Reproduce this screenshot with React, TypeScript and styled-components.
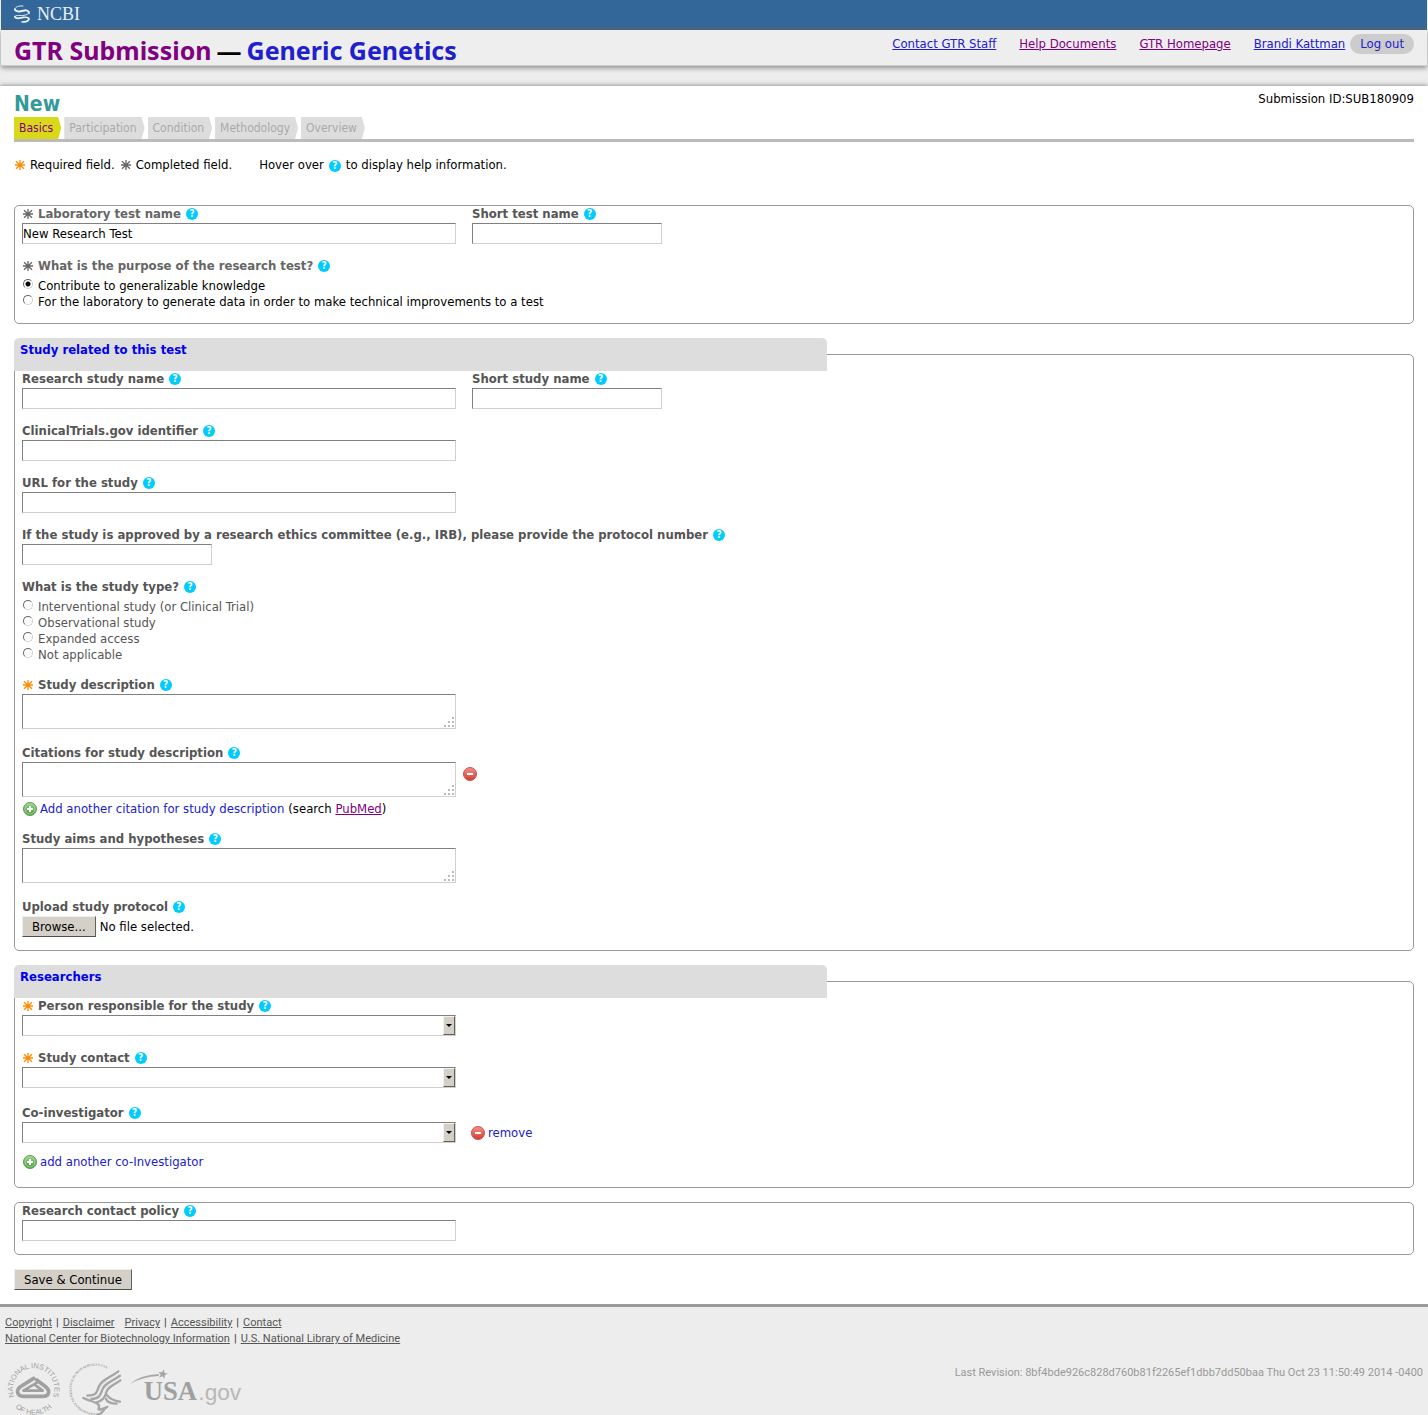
import React, { useId, useRef, useState } from "react";
import styled, { createGlobalStyle } from "styled-components";

const GlobalStyle = createGlobalStyle`
  *, *::before, *::after { box-sizing: border-box; }
  body {
    margin: 0;
    background: #ededed;
    color: #000;
    font: 13px/16px "DejaVu Sans Condensed", "DejaVu Sans", sans-serif;
  }
  button, input, textarea, select { font: inherit; color: inherit; }
`;

/* ---------- page frame ---------- */

const Page = styled.div`
  min-height: 100vh;
  display: flex;
  flex-direction: column;
`;

const BrandBar = styled.div`
  height: 30px;
  margin: 0 1px;
  padding: 0 13px;
  display: flex;
  align-items: center;
  background: #336699;
  border-bottom: 3px solid #4a6785;
`;

const BrandLink = styled.a`
  display: flex;
  align-items: center;
  gap: 7px;
  color: #e8eef5;
  font: 18px/20px "Liberation Serif", serif;
  text-decoration: none;
`;

const SiteHeader = styled.header`
  margin: 0 1px 20px;
  height: 36px;
  padding: 0 13px;
  display: flex;
  justify-content: space-between;
  background: #eee;
  border-bottom: 1px solid #ccc;
  box-shadow: 0 2px 5px rgba(0, 0, 0, 0.4);
`;

const SiteTitle = styled.h1`
  margin: 0;
  display: flex;
  gap: 5px;
  font: bold 25px/40px "Noto Sans", sans-serif;
  white-space: nowrap;
`;

const TitleLink = styled.a<{ $visited?: boolean }>`
  color: ${(p) => (p.$visited ? "#800080" : "#2020cc")};
  text-decoration: none;
`;

const HeaderNav = styled.nav`
  padding-top: 4px;
  display: flex;
  align-items: flex-start;
  gap: 23px;
  line-height: 20px;
`;

const Account = styled.div`
  display: flex;
  gap: 5px;
`;

const TextLink = styled.a<{ $visited?: boolean }>`
  color: ${(p) => (p.$visited ? "#800080" : "#2020cc")};
  text-decoration-thickness: 1px;
  text-underline-offset: 1px;
`;

const LogOut = styled.button`
  height: 20px;
  padding: 0 10px;
  border: 0;
  border-radius: 10px;
  background: #ccc;
  color: #2020cc;
`;

const Main = styled.main`
  flex: 1;
  padding: 6px 14px 14px;
  background: #fff;
  box-shadow: 0 0 5px rgba(0, 0, 0, 0.5);
`;

const Heading = styled.div`
  display: flex;
  justify-content: space-between;
  align-items: flex-start;
  height: 25px;
  line-height: 14px;
`;

const PageTitle = styled.h2`
  margin: 0;
  color: #339999;
  font-size: 21px;
  line-height: 24px;
`;

/* ---------- step tabs ---------- */

const Steps = styled.nav`
  display: flex;
  gap: 3px;
  border-bottom: 3px solid #bbb;
`;

const Step = styled.a<{ $current?: boolean }>`
  height: 22px;
  padding: 0 8px 0 5px;
  color: ${(p) => (p.$current ? "#800080" : "#aaa")};
  background: ${(p) => (p.$current ? "#d9d91a" : "#ddd")};
  font-size: 12px;
  line-height: 22px;
  text-decoration: none;
  clip-path: polygon(0 0, calc(100% - 3px) 0, 100% 50%, calc(100% - 3px) 100%, 0 100%);
`;

const Hints = styled.div`
  margin: 14px 0 31px;
  display: flex;
  align-items: center;
  gap: 27px;
  line-height: 18px;
`;

const HintGroup = styled.span`
  display: flex;
  align-items: center;
  gap: 5px;
`;

/* ---------- form ---------- */

const Form = styled.form`
  display: flex;
  flex-direction: column;
  align-items: stretch;
  gap: 14px;
`;

const Panel = styled.fieldset`
  margin: 0;
  padding: 0 7px;
  min-width: 0;
  border: 1px solid #999;
  border-radius: 5px;
`;

const PanelTitle = styled.legend`
  width: calc(60% - 17px);
  height: 33px;
  margin-left: -8px;
  padding: 0 6px;
  border-radius: 5px 5px 0 0;
  background: #ddd;
  color: #0000ee;
  font-weight: bold;
  line-height: 24px;
`;

const Columns = styled.div`
  display: flex;
  gap: 16px;
`;

const FieldBox = styled.div<{ $width?: number; $after?: number }>`
  width: ${(p) => (p.$width ? `${p.$width}px` : "auto")};
  margin-bottom: ${(p) => p.$after ?? 14}px;
`;

const Caption = styled.div<{ $done?: boolean }>`
  display: flex;
  align-items: center;
  gap: 5px;
  height: 17px;
  padding-bottom: 2px;
  color: ${(p) => (p.$done ? "#666" : "#555")};
  font-weight: bold;
  line-height: 15px;
  white-space: nowrap;
`;

const HelpButton = styled.button`
  flex: none;
  width: 12px;
  height: 12px;
  margin-top: 1px;
  padding: 0;
  border: 0;
  border-radius: 50%;
  background: #00ccff;
  color: #fff;
  font-size: 10px;
  font-weight: bold;
  line-height: 12px;
  text-align: center;
`;

const sunken = `
  border: 1px solid;
  border-color: #808080 #d4d0c8 #d4d0c8 #808080;
  border-radius: 0;
  background: #fff;
`;

const TextInput = styled.input`
  display: block;
  width: 100%;
  height: 21px;
  padding: 0 0 1px;
  color: #000;
  ${sunken}
`;

const AreaWrap = styled.div`
  position: relative;
  display: flex;
`;

const Area = styled.textarea`
  display: block;
  width: 100%;
  height: 35px;
  padding: 1px;
  resize: none;
  ${sunken}
`;

const Grip = styled.svg`
  position: absolute;
  right: 2px;
  bottom: 2px;
  pointer-events: none;
`;

const SelectWrap = styled.div`
  position: relative;
`;

const Select = styled.select`
  display: block;
  width: 100%;
  height: 21px;
  padding: 0 14px 0 2px;
  appearance: none;
  ${sunken}
`;

const SelectArrow = styled.span`
  position: absolute;
  top: 1px;
  right: 1px;
  bottom: 1px;
  width: 12px;
  display: grid;
  place-items: center;
  border: 1px solid;
  border-color: #f4f2ee #606060 #606060 #f4f2ee;
  background: #d4d0c8;
  pointer-events: none;
`;

const Options = styled.div`
  padding-top: 3px;
`;

const Option = styled.label<{ $muted?: boolean }>`
  display: flex;
  gap: 5px;
  height: 16px;
  padding-left: 1px;
  color: ${(p) => (p.$muted ? "#555" : "#000")};
`;

const Radio = styled.input`
  appearance: none;
  width: 10px;
  height: 10px;
  margin: 1px 0 0;
  border: 1px solid;
  border-color: #666 #d4d0c8 #d4d0c8 #666;
  border-radius: 50%;
  background: #fff;
  &:checked {
    background: radial-gradient(circle, #000 0 2px, #fff 3px);
  }
`;

const Row = styled.div<{ $gap?: number; $before?: number; $top?: boolean }>`
  display: flex;
  align-items: ${(p) => (p.$top ? "flex-start" : "center")};
  gap: ${(p) => p.$gap ?? 4}px;
  margin-top: ${(p) => p.$before ?? 0}px;
`;

const Sized = styled.div`
  width: 434px;
`;

const ActionButton = styled.button`
  display: flex;
  align-items: center;
  gap: 3px;
  height: 17px;
  padding: 0 0 0 1px;
  border: 0;
  background: none;
  color: #2020cc;
  line-height: 17px;
`;

const RemoveIconButton = styled.button`
  width: 14px;
  height: 14px;
  margin-top: 5px;
  padding: 0;
  border: 0;
  background: none;
  line-height: 0;
`;

const PushButton = styled.button`
  height: 21px;
  padding: 0 9px;
  align-self: flex-start;
  border: 1px solid;
  border-color: #f0eee8 #606060 #505050 #f0eee8;
  background: #d4d0c8;
  color: #000;
  line-height: 18px;
`;

const HiddenFile = styled.input`
  display: none;
`;

/* ---------- footer ---------- */

const Footer = styled.footer`
  padding: 8px 5px 0;
  border-top: 3px solid #999;
  background: #ededed;
  color: #333;
  font-family: Roboto, sans-serif;
  font-size: 11px;
  position: relative;
`;

const FooterLinks = styled.div`
  display: flex;
  gap: 4px;
`;

const FooterLink = styled.a<{ $spaced?: boolean }>`
  margin-left: ${(p) => (p.$spaced ? 6 : 0)}px;
  color: #555;
`;

const FooterBottom = styled.div`
  margin-top: 12px;
  display: flex;
  justify-content: space-between;
  align-items: flex-start;
`;

const Logos = styled.div`
  display: flex;
  align-items: flex-start;
  gap: 4px;
`;

const LogoLink = styled.a<{ $down?: boolean }>`
  display: block;
  padding-top: ${(p) => (p.$down ? 9 : 0)}px;
  line-height: 0;
`;

const Revision = styled.p`
  margin: 6px 0 0;
  color: #999;
`;

/* ---------- drawings ---------- */

const HelixMark = () => (
  <svg width="16" height="18" viewBox="0 0 48 54" fill="none" stroke="#e8f0f8" strokeLinecap="round" aria-hidden="true">
    <path d="M2 13C6 23 20 19 28 17S44 16 45 24" strokeWidth="6" />
    <path d="M2 13C4 5 14 2 27 3" strokeWidth="3" />
    <path d="M2 35C6 28 20 33 30 31C40 29 46 26 45 20" strokeWidth="3" />
    <path d="M2 35C7 45 18 38 28 37S44 37 45 42C44 48 35 51 24 51" strokeWidth="5" />
  </svg>
);

const Star = ({ done }: { done?: boolean }) => (
  <svg width="11" height="10" viewBox="0 0 11 10" stroke={done ? "#666" : "#ff8c00"} strokeWidth="1.3" aria-hidden="true">
    <path d="M6 0V10M1 5H11M2 1.2L10 8.800M10 1.2L2 8.800" />
  </svg>
);

const Badge = ({ kind }: { kind: "add" | "remove" }) => {
  const id = useId();
  const add = kind === "add";
  return (
    <svg width="14" height="14" viewBox="0 0 14 14" aria-hidden="true">
      <defs>
        <linearGradient id={id} x2="0" y2="1">
          <stop offset="0" stopColor={add ? "#9bcf8d" : "#f2938c"} />
          <stop offset="1" stopColor={add ? "#3f9a35" : "#d63a30"} />
        </linearGradient>
      </defs>
      <circle cx="7" cy="7" r="6.5" fill={`url(#${id})`} stroke={add ? "#5a9e50" : "#c9514a"} />
      {add && <circle cx="7" cy="7" r="5" fill="none" stroke="#b9dfb0" strokeWidth="0.8" />}
      <path d={add ? "M7 4V10M4 7H10" : "M4 7H10"} stroke="#fff" strokeWidth="2" />
    </svg>
  );
};

const GripDots = () => (
  <Grip width="10" height="10" viewBox="0 0 10 10" fill="#bbb" aria-hidden="true">
    <path d="M8 0h2v2H8zM4 4h2v2H4zM8 4h2v2H8zM0 8h2v2H0zM4 8h2v2H4zM8 8h2v2H8z" />
  </Grip>
);

const NihLogo = () => (
  <svg width="57" height="58" viewBox="15 20 171 174" fill="#a0a0a0" role="img" aria-label="National Institutes of Health">
    <defs>
      <path id="nihTop" d="M55 151A62 62 0 1 1 147 151" />
      <path id="nihBottom" d="M25 130A79 79 0 0 0 177 130" />
    </defs>
    <g fontFamily="Liberation Sans, sans-serif" fontSize="22">
      <text><textPath href="#nihTop" startOffset="50%" textAnchor="middle">NATIONAL INSTITUTES</textPath></text>
      <text><textPath href="#nihBottom" startOffset="50%" textAnchor="middle">OF HEALTH</textPath></text>
    </g>
    <g fill="none" stroke="#a0a0a0" strokeLinejoin="round" strokeLinecap="round">
      <path d="M101 78L60 104Q46 116 58 129Q62 132 70 132H130Q146 131 146 118Q145 109 135 102L110 83" strokeWidth="11" />
      <path d="M112 90L70 115H128L104 97" strokeWidth="8" />
    </g>
  </svg>
);

const HhsLogo = () => (
  <svg width="58" height="58" viewBox="198 20 174 174" role="img" aria-label="Department of Health and Human Services">
    <defs>
      <path id="hhsRing" d="M285 182A71 71 0 1 1 352 86" />
    </defs>
    <text fontFamily="Liberation Serif, serif" fontWeight="bold" fontSize="10" fill="#999">
      <textPath href="#hhsRing">DEPARTMENT OF HEALTH &amp; HUMAN SERVICES·USA</textPath>
    </text>
    <g fill="none" stroke="#a6a6a6" strokeWidth="7" strokeLinecap="round" strokeLinejoin="round">
      <path d="M355 57C330 76 304 82 296 104S288 128 262 130" />
      <path d="M360 70C334 88 313 94 307 112S298 138 274 140" />
      <path d="M361 84C338 100 323 104 319 120S306 147 290 150" />
      <path d="M250 137C268 146 276 145 292 154S282 176 306 170L322 164" />
      <path d="M320 128C330 140 344 146 360 148" />
      <path d="M318 140C322 150 334 154 350 154" />
      <path d="M290 187C306 188 306 176 318 166" />
    </g>
  </svg>
);

const UsaGovLogo = () => (
  <svg width="115" height="38" viewBox="383 52 345 114" role="img" aria-label="USA.gov">
    <path d="M388 101Q420 72 476 70L475 76Q424 78 388 101Z" fill="#a6a6a6" />
    <path d="M491 56L492 66L502 69L493 74L493 84L486 77L476 81L481 72L475 64L485 65Z" fill="#a6a6a6" />
    <text x="430" y="147" fontFamily="Liberation Serif, serif" fontWeight="bold" fontSize="80" fill="#a0a0a0">USA</text>
    <text x="594" y="147" fontFamily="Liberation Sans, sans-serif" fontSize="68" fill="#b8b8b8">.gov</text>
  </svg>
);

/* ---------- form parts ---------- */

const Help = ({ about }: { about: string }) => (
  <HelpButton type="button" aria-label={`Help: ${about}`} title={about}>?</HelpButton>
);

type Mark = "required" | "done";

interface LabelProps {
  text: string;
  mark?: Mark;
  htmlFor?: string;
  id?: string;
}

const FieldLabel = ({ text, mark, htmlFor, id }: LabelProps) => (
  <Caption $done={mark === "done"}>
    {mark && <Star done={mark === "done"} />}
    {htmlFor ? <label htmlFor={htmlFor}>{text}</label> : <span id={id}>{text}</span>}
    <Help about={text} />
  </Caption>
);

interface FieldProps {
  label: string;
  mark?: Mark;
  width?: number;
  after?: number;
  value?: string;
}

interface ExtraProps {
  aside?: React.ReactNode;
  children?: React.ReactNode;
}

const TextField = ({ label, mark, width = 434, after, value }: FieldProps) => {
  const id = useId();
  return (
    <FieldBox $width={width} $after={after}>
      <FieldLabel text={label} mark={mark} htmlFor={id} />
      <TextInput id={id} type="text" defaultValue={value} />
    </FieldBox>
  );
};

const AreaField = ({ label, mark, after = 16, aside, children }: FieldProps & ExtraProps) => {
  const id = useId();
  return (
    <FieldBox $after={after}>
      <FieldLabel text={label} mark={mark} htmlFor={id} />
      <Row $gap={7} $top>
        <Sized>
          <AreaWrap>
            <Area id={id} />
            <GripDots />
          </AreaWrap>
        </Sized>
        {aside}
      </Row>
      {children}
    </FieldBox>
  );
};

const SelectField = ({ label, mark, after, aside, children }: FieldProps & ExtraProps) => {
  const id = useId();
  return (
    <FieldBox $after={after}>
      <FieldLabel text={label} mark={mark} htmlFor={id} />
      <Row $gap={14}>
        <Sized>
          <SelectWrap>
            <Select id={id}><option /></Select>
            <SelectArrow>
              <svg width="6" height="3" viewBox="0 0 6 3" aria-hidden="true"><path d="M0 0H6L3 3Z" /></svg>
            </SelectArrow>
          </SelectWrap>
        </Sized>
        {aside}
      </Row>
      {children}
    </FieldBox>
  );
};

interface RadioFieldProps extends FieldProps {
  options: string[];
  muted?: boolean;
}

const RadioField = ({ label, mark, options, value, muted, after }: RadioFieldProps) => {
  const id = useId();
  return (
    <FieldBox role="radiogroup" aria-labelledby={id} $after={after}>
      <FieldLabel text={label} mark={mark} id={id} />
      <Options>
        {options.map((o) => (
          <Option key={o} $muted={muted}>
            <Radio type="radio" name={id + "choice"} defaultChecked={o === value} />
            {o}
          </Option>
        ))}
      </Options>
    </FieldBox>
  );
};

const FileField = () => {
  const id = useId();
  const file = useRef<HTMLInputElement>(null);
  const [name, setName] = useState("No file selected.");
  return (
    <FieldBox $after={13}>
      <FieldLabel text="Upload study protocol" htmlFor={id} />
      <Row>
        <HiddenFile ref={file} id={id} type="file" onChange={(e) => setName(e.target.files?.[0]?.name ?? "No file selected.")} />
        <PushButton type="button" onClick={() => file.current?.click()}>Browse...</PushButton>
        <span>{name}</span>
      </Row>
    </FieldBox>
  );
};

const steps = ["Basics", "Participation", "Condition", "Methodology", "Overview"];

export default function App() {
  return (
    <Page>
      <GlobalStyle />
      <BrandBar>
        <BrandLink href="#ncbi"><HelixMark />NCBI</BrandLink>
      </BrandBar>
      <SiteHeader>
        <SiteTitle>
          <TitleLink href="#gtr" $visited>GTR Submission</TitleLink>
          <span>—</span>
          <TitleLink href="#lab">Generic Genetics</TitleLink>
        </SiteTitle>
        <HeaderNav>
          <TextLink href="#contact">Contact GTR Staff</TextLink>
          <TextLink href="#help" $visited>Help Documents</TextLink>
          <TextLink href="#home" $visited>GTR Homepage</TextLink>
          <Account>
            <TextLink href="#user">Brandi Kattman</TextLink>
            <LogOut type="button">Log out</LogOut>
          </Account>
        </HeaderNav>
      </SiteHeader>

      <Main>
        <Heading>
          <PageTitle>New</PageTitle>
          <span>Submission ID:SUB180909</span>
        </Heading>
        <Steps>
          {steps.map((s, i) => (
            <Step key={s} href={`#${s}`} $current={i === 0}>{s}</Step>
          ))}
        </Steps>
        <Hints>
          <HintGroup>
            <Star /> <span>Required field.</span>
            <Star done /> <span>Completed field.</span>
          </HintGroup>
          <HintGroup>Hover over <Help about="Help information" /> to display help information.</HintGroup>
        </Hints>

        <Form onSubmit={(e) => e.preventDefault()}>
          <Panel>
            <Columns>
              <TextField label="Laboratory test name" mark="done" value="New Research Test" />
              <TextField label="Short test name" width={190} />
            </Columns>
            <RadioField
              label="What is the purpose of the research test?"
              mark="done"
              after={13}
              value="Contribute to generalizable knowledge"
              options={[
                "Contribute to generalizable knowledge",
                "For the laboratory to generate data in order to make technical improvements to a test",
              ]}
            />
          </Panel>

          <Panel>
            <PanelTitle>Study related to this test</PanelTitle>
            <Columns>
              <TextField label="Research study name" />
              <TextField label="Short study name" width={190} />
            </Columns>
            <TextField label="ClinicalTrials.gov identifier" />
            <TextField label="URL for the study" />
            <TextField
              label="If the study is approved by a research ethics committee (e.g., IRB), please provide the protocol number"
              width={190}
            />
            <RadioField
              label="What is the study type?"
              muted
              options={["Interventional study (or Clinical Trial)", "Observational study", "Expanded access", "Not applicable"]}
            />
            <AreaField label="Study description" mark="required" />
            <AreaField
              label="Citations for study description"
              after={14}
              aside={<RemoveIconButton type="button" aria-label="Remove citation"><Badge kind="remove" /></RemoveIconButton>}
            >
              <Row $before={3}>
                <ActionButton type="button"><Badge kind="add" />Add another citation for study description</ActionButton>
                <span>(search <TextLink href="#pubmed" $visited>PubMed</TextLink>)</span>
              </Row>
            </AreaField>
            <AreaField label="Study aims and hypotheses" />
            <FileField />
          </Panel>

          <Panel>
            <PanelTitle>Researchers</PanelTitle>
            <SelectField label="Person responsible for the study" mark="required" />
            <SelectField label="Study contact" mark="required" after={17} />
            <SelectField
              label="Co-investigator"
              after={17}
              aside={<ActionButton type="button"><Badge kind="remove" />remove</ActionButton>}
            >
              <Row $before={10}>
                <ActionButton type="button"><Badge kind="add" />add another co-Investigator</ActionButton>
              </Row>
            </SelectField>
          </Panel>

          <Panel>
            <TextField label="Research contact policy" after={13} />
          </Panel>

          <PushButton type="submit">Save &amp; Continue</PushButton>
        </Form>
      </Main>

      <Footer>
        <FooterLinks>
          <FooterLink href="#copyright">Copyright</FooterLink>|
          <FooterLink href="#disclaimer">Disclaimer</FooterLink>
          <FooterLink href="#privacy" $spaced>Privacy</FooterLink>|
          <FooterLink href="#accessibility">Accessibility</FooterLink>|
          <FooterLink href="#contact">Contact</FooterLink>
        </FooterLinks>
        <FooterLinks>
          <FooterLink href="#ncbi">National Center for Biotechnology Information</FooterLink>|
          <FooterLink href="#nlm">U.S. National Library of Medicine</FooterLink>
        </FooterLinks>
        <FooterBottom>
          <Logos>
            <LogoLink href="#nih"><NihLogo /></LogoLink>
            <LogoLink href="#hhs"><HhsLogo /></LogoLink>
            <LogoLink href="#usa" $down><UsaGovLogo /></LogoLink>
          </Logos>
          <Revision>Last Revision: 8bf4bde926c828d760b81f2265ef1dbb7dd50baa Thu Oct 23 11:50:49 2014 -0400</Revision>
        </FooterBottom>
      </Footer>
    </Page>
  );
}
